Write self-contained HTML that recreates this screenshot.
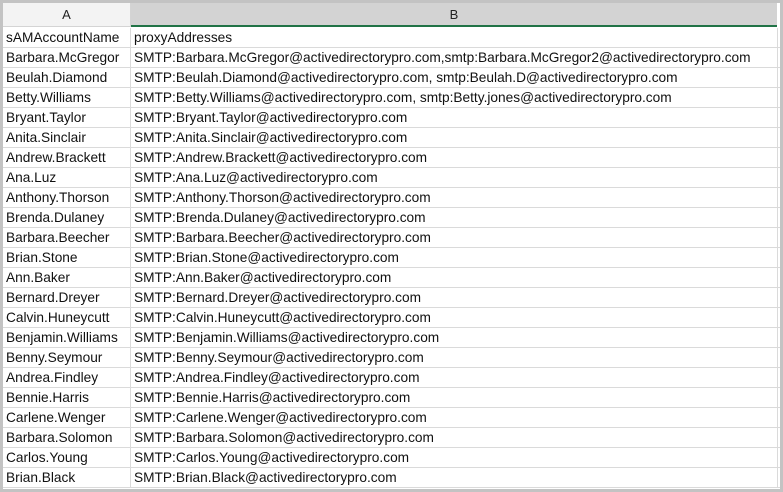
<!DOCTYPE html>
<html><head><style>
html,body{margin:0;padding:0;background:#fff;width:783px;height:492px;overflow:hidden;}
body{position:relative;font-family:"Liberation Sans",Arial,sans-serif;}
.frame{position:absolute;left:0;top:0;width:783px;height:492px;box-sizing:border-box;border:3px solid #c3c3c3;z-index:2;pointer-events:none;}
.hdr{position:absolute;top:3px;height:24px;font-size:13px;color:#222;text-align:center;line-height:24px;box-sizing:border-box;}
.ha{left:3px;width:128px;background:#f3f3f3;border-right:1px solid #d4d4d4;border-bottom:1px solid #d4d4d4;}
.hb{left:131px;width:646px;background:#d3d3d3;border-bottom:2px solid #217346;}
.wrap{position:absolute;left:3px;top:27px;width:777px;height:462px;overflow:hidden;font-size:13.7px;color:#111;}
.r{position:relative;height:20px;box-sizing:border-box;border-top:1px solid #dadada;}
.c{position:absolute;top:0;height:19px;line-height:20px;white-space:nowrap;overflow:hidden;box-sizing:border-box;padding-left:3px;}
.a{left:0;width:128px;border-right:1px solid #dadada;}
.b{left:128px;width:647px;border-right:1px solid #dadada;}
</style></head><body>
<div class="frame"></div>
<div class="hdr ha">A</div>
<div class="hdr hb">B</div>
<div class="wrap">
<div class="r" style="border-top:none;height:20px"><div class="c a" style="top:1px">sAMAccountName</div><div class="c b" style="top:1px">proxyAddresses</div></div>
<div class="r"><div class="c a">Barbara.McGregor</div><div class="c b">SMTP:Barbara.McGregor@activedirectorypro.com,smtp:Barbara.McGregor2@activedirectorypro.com</div></div>
<div class="r"><div class="c a">Beulah.Diamond</div><div class="c b">SMTP:Beulah.Diamond@activedirectorypro.com, smtp:Beulah.D@activedirectorypro.com</div></div>
<div class="r"><div class="c a">Betty.Williams</div><div class="c b">SMTP:Betty.Williams@activedirectorypro.com, smtp:Betty.jones@activedirectorypro.com</div></div>
<div class="r"><div class="c a">Bryant.Taylor</div><div class="c b">SMTP:Bryant.Taylor@activedirectorypro.com</div></div>
<div class="r"><div class="c a">Anita.Sinclair</div><div class="c b">SMTP:Anita.Sinclair@activedirectorypro.com</div></div>
<div class="r"><div class="c a">Andrew.Brackett</div><div class="c b">SMTP:Andrew.Brackett@activedirectorypro.com</div></div>
<div class="r"><div class="c a">Ana.Luz</div><div class="c b">SMTP:Ana.Luz@activedirectorypro.com</div></div>
<div class="r"><div class="c a">Anthony.Thorson</div><div class="c b">SMTP:Anthony.Thorson@activedirectorypro.com</div></div>
<div class="r"><div class="c a">Brenda.Dulaney</div><div class="c b">SMTP:Brenda.Dulaney@activedirectorypro.com</div></div>
<div class="r"><div class="c a">Barbara.Beecher</div><div class="c b">SMTP:Barbara.Beecher@activedirectorypro.com</div></div>
<div class="r"><div class="c a">Brian.Stone</div><div class="c b">SMTP:Brian.Stone@activedirectorypro.com</div></div>
<div class="r"><div class="c a">Ann.Baker</div><div class="c b">SMTP:Ann.Baker@activedirectorypro.com</div></div>
<div class="r"><div class="c a">Bernard.Dreyer</div><div class="c b">SMTP:Bernard.Dreyer@activedirectorypro.com</div></div>
<div class="r"><div class="c a">Calvin.Huneycutt</div><div class="c b">SMTP:Calvin.Huneycutt@activedirectorypro.com</div></div>
<div class="r"><div class="c a">Benjamin.Williams</div><div class="c b">SMTP:Benjamin.Williams@activedirectorypro.com</div></div>
<div class="r"><div class="c a">Benny.Seymour</div><div class="c b">SMTP:Benny.Seymour@activedirectorypro.com</div></div>
<div class="r"><div class="c a">Andrea.Findley</div><div class="c b">SMTP:Andrea.Findley@activedirectorypro.com</div></div>
<div class="r"><div class="c a">Bennie.Harris</div><div class="c b">SMTP:Bennie.Harris@activedirectorypro.com</div></div>
<div class="r"><div class="c a">Carlene.Wenger</div><div class="c b">SMTP:Carlene.Wenger@activedirectorypro.com</div></div>
<div class="r"><div class="c a">Barbara.Solomon</div><div class="c b">SMTP:Barbara.Solomon@activedirectorypro.com</div></div>
<div class="r"><div class="c a">Carlos.Young</div><div class="c b">SMTP:Carlos.Young@activedirectorypro.com</div></div>
<div class="r"><div class="c a">Brian.Black</div><div class="c b">SMTP:Brian.Black@activedirectorypro.com</div></div>
<div class="r"></div>
</div>
</body></html>
